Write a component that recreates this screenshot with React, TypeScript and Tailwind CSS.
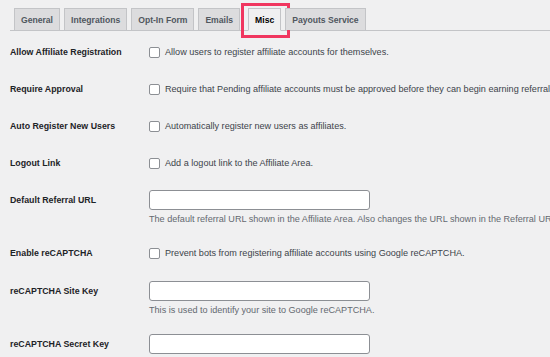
import React from "react";

const tabs = ["General", "Integrations", "Opt-In Form", "Emails", "Misc", "Payouts Service"];

function Checkbox() {
  return <span className="inline-block w-[11px] h-[11px] rounded-[2px] border border-[#8c8f94] bg-white shrink-0" />;
}

function Row({ label, children, h, lt = "pt-0" }: { label: string; children: React.ReactNode; h: string; lt?: string }) {
  return (
    <div className={`flex items-start ${h}`}>
      <div className={`w-[139px] shrink-0 font-bold text-[#1d2327] text-[8.8px] leading-[12px] ${lt}`}>{label}</div>
      <div className="flex-1 min-w-0">{children}</div>
    </div>
  );
}

export default function App() {
  return (
    <div className="w-[550px] h-[357px] overflow-hidden bg-[#f0f0f1] text-[9.1px] leading-[12px]" style={{ fontFamily: "'Liberation Sans', Arial, sans-serif" }}>
      <div className="pt-[8px] pl-[10px]">
        <div className="flex items-end border-b border-[#c3c4c7] pl-[4px] h-[23px] gap-[4px]">
          {tabs.map((t) => (
            <div key={t} className={t === "Misc" ? "relative ml-[4px]" : "relative"}>
              <div
                className={
                  t === "Misc"
                    ? "h-[23px] -mb-px px-[6px] flex items-center border border-[#c3c4c7] border-b-[#f0f0f1] bg-[#f0f0f1] text-black font-bold text-[8.6px]"
                    : "h-[22px] px-[6px] flex items-center border border-[#c3c4c7] border-b-0 bg-[#dcdcde] text-[#50575e] font-bold text-[8.6px]"
                }
              >
                {t}
              </div>
              {t === "Misc" && (
                <div className="absolute left-[-7px] right-[-9px] top-[-5px] h-[35px] border-[3px] border-[#f0365f]" />
              )}
            </div>
          ))}
        </div>
      </div>
      <div className="pl-[10px] pt-[15px] text-[#3c434a]">
        <Row label="Allow Affiliate Registration" h="h-[37px]">
          <div className="flex items-center gap-[5px]"><Checkbox /><span>Allow users to register affiliate accounts for themselves.</span></div>
        </Row>
        <Row label="Require Approval" h="h-[37px]">
          <div className="flex items-center gap-[5px] whitespace-nowrap"><Checkbox /><span>Require that Pending affiliate accounts must be approved before they can begin earning referrals.</span></div>
        </Row>
        <Row label="Auto Register New Users" h="h-[37px]">
          <div className="flex items-center gap-[5px]"><Checkbox /><span>Automatically register new users as affiliates.</span></div>
        </Row>
        <Row label="Logout Link" h="h-[33px]">
          <div className="flex items-center gap-[5px]"><Checkbox /><span>Add a logout link to the Affiliate Area.</span></div>
        </Row>
        <Row label="Default Referral URL" h="h-[57px]" lt="pt-[4px]">
          <div>
            <div className="w-[221px] h-[20px] bg-white border border-[#8c8f94] rounded-[3px]" />
            <div className="mt-[3px] text-[#646970] whitespace-nowrap">The default referral URL shown in the Affiliate Area. Also changes the URL shown in the Referral URL Generator.</div>
          </div>
        </Row>
        <Row label="Enable reCAPTCHA" h="h-[34px]">
          <div className="flex items-center gap-[5px]"><Checkbox /><span>Prevent bots from registering affiliate accounts using Google reCAPTCHA.</span></div>
        </Row>
        <Row label="reCAPTCHA Site Key" h="h-[53px]" lt="pt-[4px]">
          <div>
            <div className="w-[221px] h-[20px] bg-white border border-[#8c8f94] rounded-[3px]" />
            <div className="mt-[3px] text-[#646970] whitespace-nowrap">This is used to identify your site to Google reCAPTCHA.</div>
          </div>
        </Row>
        <Row label="reCAPTCHA Secret Key" h="h-[30px]" lt="pt-[4px]">
          <div>
            <div className="w-[221px] h-[20px] bg-white border border-[#8c8f94] rounded-[3px]" />
          </div>
        </Row>
      </div>
    </div>
  );
}
